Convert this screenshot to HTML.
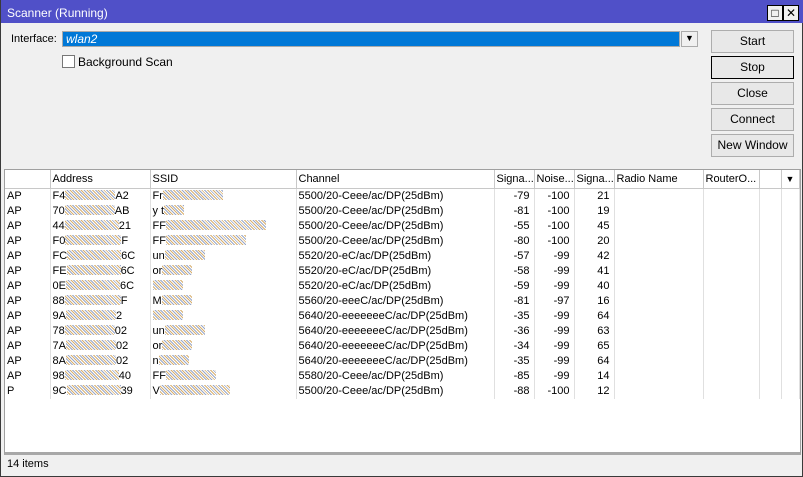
<!DOCTYPE html>
<html><head><style>
*{margin:0;padding:0;box-sizing:border-box}
body{width:803px;height:477px;overflow:hidden;background:#f0f0f0;font-family:"Liberation Sans",sans-serif;font-size:11px;color:#000;position:relative}
.win{position:absolute;left:0;top:0;width:803px;height:477px;border:1px solid #3a3a3a;border-top:none;background:#f0f0f0}
.title{position:absolute;left:0;top:0;width:803px;height:23px;background:#5050c8;color:#fff;font-size:12px;padding:7px 0 0 6px;line-height:12px}
.tb{position:absolute;top:5px;width:16px;height:16px;background:#f0f0f0;border:1px solid #000;font-size:12px;line-height:14px;text-align:center;color:#000}
.lbl{position:absolute}
.field{position:absolute;left:61px;top:31px;width:618px;height:16px;background:#0078d7;border:1px solid #aaa;color:#fff;font-style:italic;padding-left:3px;line-height:14px;font-size:12px}
.dd{position:absolute;left:680px;top:31px;width:17px;height:16px;background:#f0f0f0;border:1px solid #aaa;font-size:9px;text-align:center;line-height:13px}
.cb{position:absolute;left:61px;top:55px;width:13px;height:13px;border:1px solid #777;background:#fff}
.btn{position:absolute;left:710px;width:83px;height:23px;border:1px solid #adadad;background:#e8e8e8;text-align:center;line-height:21px;font-size:12px}
.tbl{position:absolute;left:3px;top:169px;width:797px;height:286px;background:#fff;border:1px solid #a0a0a0;border-bottom:3px solid #a8a8a8;overflow:hidden}
table{border-collapse:collapse;table-layout:fixed;font-size:11px;width:794px}
td{height:15px;line-height:15px;padding:0 2px;border-right:1px solid #e0e0e0;white-space:nowrap;overflow:hidden}
tr.h td{height:17px;line-height:17px;padding-top:1px;border-bottom:1px solid #c8c8c8;border-right:1px solid #c8c8c8;font-size:11px}
.r{text-align:right;padding-right:4px}
.n{display:inline-block;height:10px;vertical-align:-1px;background:repeating-linear-gradient(45deg,#9aa8c8 0 1px,#fff 1px 2px,#d8b070 2px 3px,#fff 3px 4px)}
.status{position:absolute;left:6px;top:458px;font-size:11px}
</style></head><body>
<div class="win">
<div class="title">Scanner (Running)</div>
<div class="tb" style="left:766px">□</div>
<div class="tb" style="left:782px">✕</div>
<div class="lbl" style="left:10px;top:33px">Interface:</div>
<div class="field">wlan2</div>
<div class="dd">▼</div>
<div class="cb"></div>
<div class="lbl" style="left:77px;top:55px;font-size:12px">Background Scan</div>
<div class="btn" style="top:30px">Start</div>
<div class="btn" style="top:56px;border-color:#000">Stop</div>
<div class="btn" style="top:82px">Close</div>
<div class="btn" style="top:108px">Connect</div>
<div class="btn" style="top:134px">New Window</div>
<div class="tbl"><table>
<colgroup><col style="width:45px"><col style="width:100px"><col style="width:146px"><col style="width:198px"><col style="width:40px"><col style="width:40px"><col style="width:40px"><col style="width:89px"><col style="width:56px"><col style="width:22px"><col style="width:18px"></colgroup>
<tr class="h"><td></td><td>Address</td><td>SSID</td><td>Channel</td><td>Signa...</td><td>Noise...</td><td>Signa...</td><td>Radio Name</td><td>RouterO...</td><td></td><td style="font-size:9px;text-align:center">▼</td></tr>
<tr><td>AP</td><td>F4<span class="n" style="width:50px"></span>A2</td><td>Fr<span class="n" style="width:60px"></span></td><td>5500/20-Ceee/ac/DP(25dBm)</td><td class="r">-79</td><td class="r">-100</td><td class="r">21</td><td></td><td></td><td></td><td></td></tr>
<tr><td>AP</td><td>70<span class="n" style="width:50px"></span>AB</td><td>y t<span class="n" style="width:20px"></span></td><td>5500/20-Ceee/ac/DP(25dBm)</td><td class="r">-81</td><td class="r">-100</td><td class="r">19</td><td></td><td></td><td></td><td></td></tr>
<tr><td>AP</td><td>44<span class="n" style="width:54px"></span>21</td><td>FF<span class="n" style="width:100px"></span></td><td>5500/20-Ceee/ac/DP(25dBm)</td><td class="r">-55</td><td class="r">-100</td><td class="r">45</td><td></td><td></td><td></td><td></td></tr>
<tr><td>AP</td><td>F0<span class="n" style="width:56px"></span>F</td><td>FF<span class="n" style="width:80px"></span></td><td>5500/20-Ceee/ac/DP(25dBm)</td><td class="r">-80</td><td class="r">-100</td><td class="r">20</td><td></td><td></td><td></td><td></td></tr>
<tr><td>AP</td><td>FC<span class="n" style="width:54px"></span>6C</td><td>un<span class="n" style="width:40px"></span></td><td>5520/20-eC/ac/DP(25dBm)</td><td class="r">-57</td><td class="r">-99</td><td class="r">42</td><td></td><td></td><td></td><td></td></tr>
<tr><td>AP</td><td>FE<span class="n" style="width:54px"></span>6C</td><td>or<span class="n" style="width:30px"></span></td><td>5520/20-eC/ac/DP(25dBm)</td><td class="r">-58</td><td class="r">-99</td><td class="r">41</td><td></td><td></td><td></td><td></td></tr>
<tr><td>AP</td><td>0E<span class="n" style="width:54px"></span>6C</td><td><span class="n" style="width:30px"></span></td><td>5520/20-eC/ac/DP(25dBm)</td><td class="r">-59</td><td class="r">-99</td><td class="r">40</td><td></td><td></td><td></td><td></td></tr>
<tr><td>AP</td><td>88<span class="n" style="width:56px"></span>F</td><td>M<span class="n" style="width:30px"></span></td><td>5560/20-eeeC/ac/DP(25dBm)</td><td class="r">-81</td><td class="r">-97</td><td class="r">16</td><td></td><td></td><td></td><td></td></tr>
<tr><td>AP</td><td>9A<span class="n" style="width:50px"></span>2</td><td><span class="n" style="width:30px"></span></td><td>5640/20-eeeeeeeC/ac/DP(25dBm)</td><td class="r">-35</td><td class="r">-99</td><td class="r">64</td><td></td><td></td><td></td><td></td></tr>
<tr><td>AP</td><td>78<span class="n" style="width:50px"></span>02</td><td>un<span class="n" style="width:40px"></span></td><td>5640/20-eeeeeeeC/ac/DP(25dBm)</td><td class="r">-36</td><td class="r">-99</td><td class="r">63</td><td></td><td></td><td></td><td></td></tr>
<tr><td>AP</td><td>7A<span class="n" style="width:50px"></span>02</td><td>or<span class="n" style="width:30px"></span></td><td>5640/20-eeeeeeeC/ac/DP(25dBm)</td><td class="r">-34</td><td class="r">-99</td><td class="r">65</td><td></td><td></td><td></td><td></td></tr>
<tr><td>AP</td><td>8A<span class="n" style="width:50px"></span>02</td><td>n<span class="n" style="width:30px"></span></td><td>5640/20-eeeeeeeC/ac/DP(25dBm)</td><td class="r">-35</td><td class="r">-99</td><td class="r">64</td><td></td><td></td><td></td><td></td></tr>
<tr><td>AP</td><td>98<span class="n" style="width:54px"></span>40</td><td>FF<span class="n" style="width:50px"></span></td><td>5580/20-Ceee/ac/DP(25dBm)</td><td class="r">-85</td><td class="r">-99</td><td class="r">14</td><td></td><td></td><td></td><td></td></tr>
<tr><td>P</td><td>9C<span class="n" style="width:54px"></span>39</td><td>V<span class="n" style="width:70px"></span></td><td>5500/20-Ceee/ac/DP(25dBm)</td><td class="r">-88</td><td class="r">-100</td><td class="r">12</td><td></td><td></td><td></td><td></td></tr>
</table></div>
<div class="status">14 items</div>
</div>
</body></html>
